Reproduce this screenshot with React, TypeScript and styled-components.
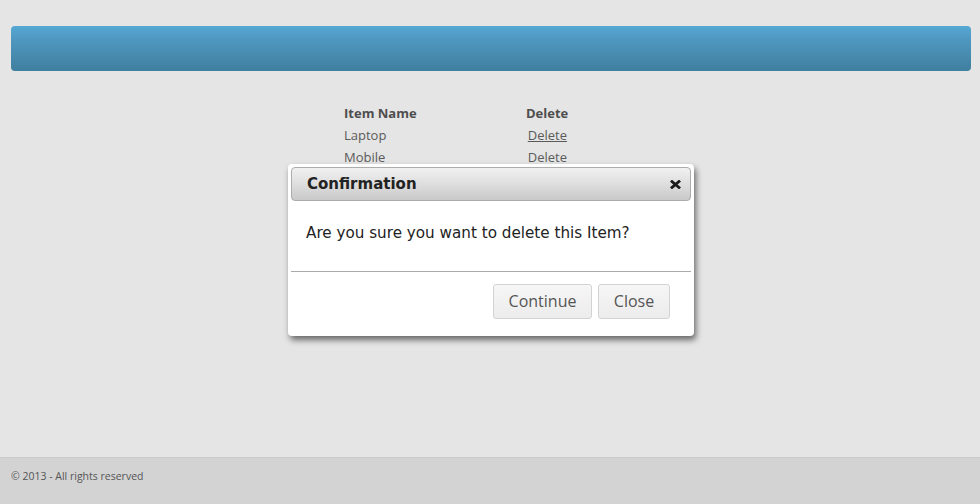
import React from "react";
import styled, { createGlobalStyle } from "styled-components";

const Global = createGlobalStyle`
  html, body { margin: 0; padding: 0; background: #e5e5e5; }
  body { font-family: "Open Sans", "Liberation Sans", sans-serif; }
`;

const Page = styled.div`
  position: relative;
  display: flex;
  flex-direction: column;
  min-height: 504px;
`;

const HeaderBar = styled.div`
  margin: 26px 9px 0 11px;
  height: 45px;
  border-radius: 4px;
  background: linear-gradient(to bottom, #56a8d5 0%, #4f97c0 30%, #3f7f9f 100%);
`;

const Main = styled.main`
  flex: 1;
  padding: 31px 0 0 344px;
`;

const Table = styled.div`
  display: grid;
  grid-template-columns: 182px 41px;
  grid-auto-rows: 22px;
  align-items: center;
  font-size: 13px;
  color: #5a5a5a;
`;

const HeadCell = styled.div<{ $right?: boolean }>`
  font-weight: 700;
  color: #4e4e4e;
  text-align: ${(p) => (p.$right ? "right" : "left")};
`;

const Cell = styled.div<{ $right?: boolean; $link?: boolean }>`
  text-align: ${(p) => (p.$right ? "right" : "left")};
  text-decoration: ${(p) => (p.$link ? "underline" : "none")};
  white-space: nowrap;
`;

const Footer = styled.footer`
  height: 47px;
  box-sizing: border-box;
  border-top: 1px solid #cacaca;
  background: #d3d3d3;
  padding: 11px 0 0 11px;
  font-size: 10.5px;
  line-height: 14px;
  color: #555;
`;

const Dialog = styled.div`
  position: absolute;
  left: 288px;
  top: 164px;
  width: 400px;
  padding: 3px;
  background: #fff;
  border-radius: 4px;
  box-shadow: 2px 4px 6px rgba(0, 0, 0, 0.55);
  font-family: "DejaVu Sans", Verdana, sans-serif;
`;

const TitleBar = styled.div`
  height: 32px;
  border: 1px solid #acacac;
  border-radius: 4px;
  background: linear-gradient(to bottom, #f1f1f1 0%, #dcdcdc 55%, #c9c9c9 100%);
  display: flex;
  align-items: center;
  justify-content: space-between;
  padding: 0 9px 0 15px;
`;

const Title = styled.span`
  font-weight: 700;
  font-size: 15px;
  color: #222;
`;

const CloseX = styled.svg`
  width: 11px;
  height: 9px;
  margin-top: 1px;
`;

const Body = styled.div`
  height: 70px;
  padding: 23px 0 0 15px;
  box-sizing: border-box;
  font-size: 15.2px;
  color: #222;
`;

const ButtonPane = styled.div`
  border-top: 1px solid #aaa;
  display: flex;
  justify-content: flex-end;
  gap: 6px;
  padding: 12px 21px 14px 0;
`;

const Button = styled.button<{ $w: number }>`
  width: ${(p) => p.$w}px;
  height: 35px;
  border: 1px solid #d3d3d3;
  border-radius: 3px;
  background: linear-gradient(to bottom, #f6f6f6 0%, #ececec 100%);
  font-family: "Open Sans", "Liberation Sans", sans-serif;
  font-size: 16px;
  line-height: 20px;
  color: #555;
  padding: 0 0 2px;
`;

export default function App() {
  return (
    <>
      <Global />
      <Page>
        <HeaderBar />
        <Main>
          <Table>
            <HeadCell>Item Name</HeadCell>
            <HeadCell $right>Delete</HeadCell>
            <Cell>Laptop</Cell>
            <Cell $right $link>Delete</Cell>
            <Cell>Mobile</Cell>
            <Cell $right>Delete</Cell>
          </Table>
        </Main>
        <Footer>© 2013 - All rights reserved</Footer>
        <Dialog>
          <TitleBar>
            <Title>Confirmation</Title>
            <CloseX viewBox="0 0 11 9">
              <path d="M2 1.5 L9 7.5 M9 1.5 L2 7.5" stroke="#1a1a1a" strokeWidth="2.8" strokeLinecap="square" />
            </CloseX>
          </TitleBar>
          <Body>Are you sure you want to delete this Item?</Body>
          <ButtonPane>
            <Button $w={99}>Continue</Button>
            <Button $w={72}>Close</Button>
          </ButtonPane>
        </Dialog>
      </Page>
    </>
  );
}
